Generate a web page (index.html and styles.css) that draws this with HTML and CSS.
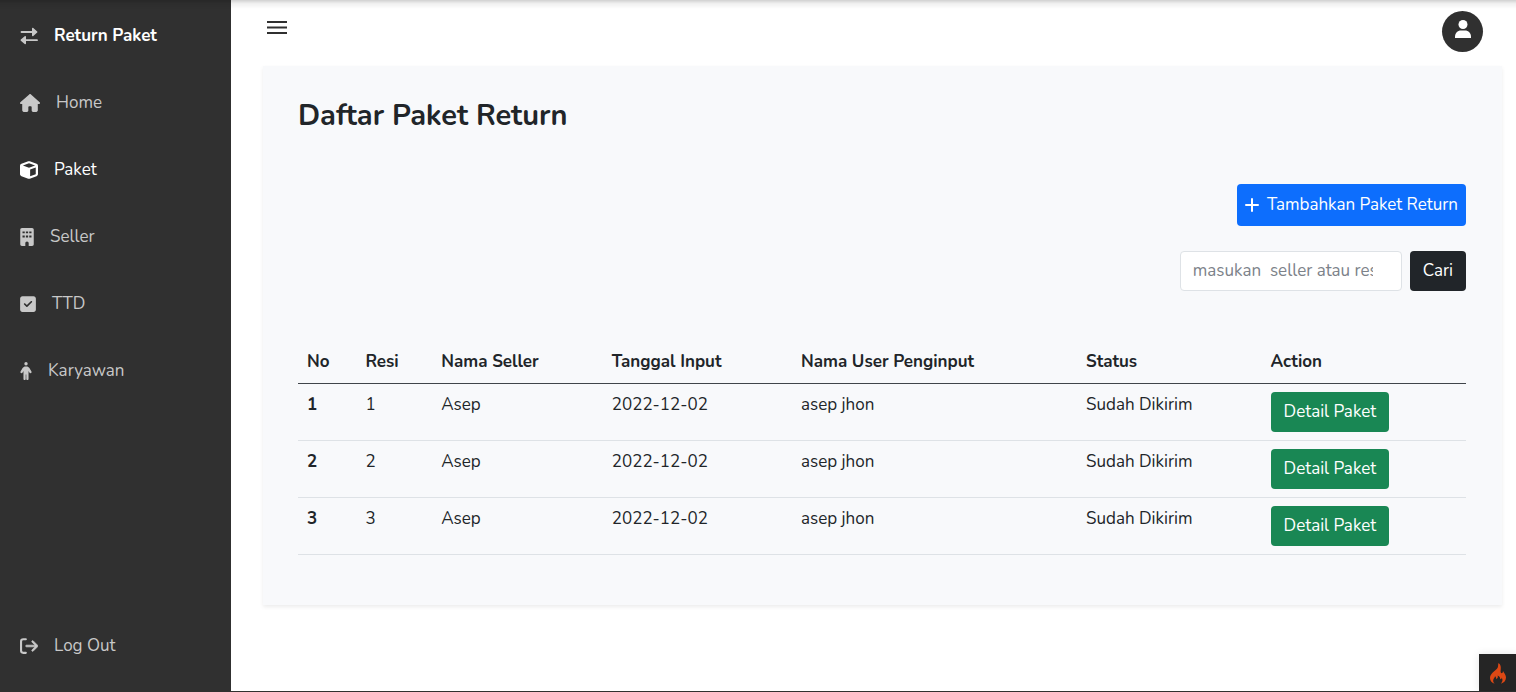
FILE: index.html
```html
<!DOCTYPE html>
<html lang="id">
<head>
<meta charset="utf-8">
<meta name="viewport" content="width=device-width, initial-scale=1">
<title>Daftar Paket Return</title>
<link rel="stylesheet" href="styles.css">
</head>
<body>
<div class="top-shade"></div>
<div class="layout">
  <nav class="sidebar" aria-label="Menu utama">
    <a class="nav-link brand" href="#"><svg class="icon" width="18" height="18" viewBox="0 0 18 18"><path d="M1.500 5H13M5 13.200h12" stroke="currentColor" stroke-width="1.800" stroke-linecap="round"/><path d="M12 1.600c0-.7.800-1 1.300-.5l3.900 3.300c.4.300.4.900 0 1.200L13.300 8.900c-.5.500-1.300.2-1.300-.5zM6 9.800c0-.7-.8-1-1.300-.5L.8 12.600c-.4.300-.4.900 0 1.200l3.900 3.300c.5.500 1.300.2 1.300-.5z"/></svg>Return Paket</a>
    <a class="nav-link" href="#"><svg class="icon" width="20" height="18" viewBox="0 0 576 512"><path d="M576 256c0 18-15 32-32 32h-32l1 160v19c0 25-20 45-45 45h-92c-22 0-40-18-40-40V376c0-14-10-24-24-24h-48c-14 0-24 10-24 24v96c0 22-18 40-40 40h-92c-25 0-44-20-44-44V288H32c-18 0-32-14-32-32 0-9 3-17 10-24L266 8c7-7 15-8 22-8s15 2 21 7l256 225c8 7 12 15 11 24z"/></svg>Home</a>
    <a class="nav-link active" href="#"><svg class="icon" width="18" height="18" viewBox="0 0 512 512"><path fill-rule="evenodd" d="M234 10c14-5 30-5 44 0l192 69c25 9 42 33 42 60v234c0 27-17 51-42 60l-192 69c-14 5-30 5-44 0L42 433c-25-9-42-33-42-60V139c0-27 17-51 42-60zM256 66 82 129l174 63 174-63zm32 368 160-58V187l-160 58z"/></svg>Paket</a>
    <a class="nav-link" href="#"><svg class="icon" width="14" height="18" viewBox="0 0 384 512"><path fill-rule="evenodd" d="M48 0h288c27 0 48 21 48 48v416c0 27-21 48-48 48h-96v-80c0-27-21-48-48-48s-48 21-48 48v80H48c-27 0-48-21-48-48V48C0 21 21 0 48 0zM64 96v56h64V96zm96 0v56h64V96zm96 0v56h64V96zM64 216v56h64v-56zm96 0v56h64v-56zm96 0v56h64v-56z"/></svg>Seller</a>
    <a class="nav-link" href="#"><svg class="icon" width="16" height="18" viewBox="0 0 448 512"><path fill-rule="evenodd" d="M64 32h320c35 0 64 29 64 64v320c0 35-29 64-64 64H64c-35 0-64-29-64-64V96c0-35 29-64 64-64zm273 177c9-9 9-25 0-34s-25-9-34 0L192 286l-47-47c-9-9-25-9-34 0s-9 25 0 34l64 64c9 9 25 9 34 0z"/></svg>TTD</a>
    <a class="nav-link" href="#"><svg class="icon" width="12" height="18" viewBox="0 0 320 512"><circle cx="160" cy="48" r="48"/><path d="M152 352v128c0 18-14 32-32 32s-32-14-32-32V257l-29 47c-9 16-28 20-43 11s-20-29-11-44l58-97c18-29 49-46 83-46h28c34 0 65 17 83 46l58 97c9 15 4 35-11 44s-34 4-43-11l-29-47v223c0 18-14 32-32 32s-32-14-32-32V352z"/></svg>Karyawan</a>
    <a class="nav-link logout" href="#"><svg class="icon" width="18" height="18" viewBox="0 0 512 512"><path d="M505 273c9-10 9-25 0-34L377 111c-10-10-26-9-35 0-10 10-9 26 0 35l86 86H184c-13 0-24 11-24 24s11 24 24 24h244l-86 86c-9 9-10 25 0 35 9 9 25 10 35 0z" stroke="currentColor" stroke-width="20"/><path d="M166 62H94C57 62 30 91 30 126v260c0 35 27 64 64 64h72" fill="none" stroke="currentColor" stroke-width="60" stroke-linecap="round"/></svg>Log Out</a>
  </nav>
  <div class="content">
    <header class="topbar">
      <button class="menu-toggle" type="button" aria-label="Buka menu"><svg width="20" height="14" viewBox="0 0 20 14"><path d="M0 1h20M0 6.500h20M0 12h20" stroke="#303030" stroke-width="1.800"/></svg></button>
      <button class="avatar" type="button" aria-label="Profil"><svg width="16" height="18" viewBox="0 0 16 18"><circle cx="8" cy="4.500" r="4.500"/><path d="M0 18v-1c0-4 2.500-6.500 6-6.500h4c3.500 0 6 2.500 6 6.500v1z"/></svg></button>
    </header>
    <main class="card">
      <h1 class="title">Daftar Paket Return</h1>
      <div class="actions">
        <a class="btn btn-add" href="#"><svg width="14" height="14" viewBox="0 0 14 14"><path d="M7 1v12M1 7h12" stroke="currentColor" stroke-width="2" stroke-linecap="round"/></svg>Tambahkan Paket Return</a>
        <form class="search">
          <input class="search-input" type="text" aria-label="Cari seller atau resi" placeholder="masukan  seller atau resi">
          <button class="btn btn-dark" type="button">Cari</button>
        </form>
      </div>
      <table class="table">
        <colgroup><col class="c-no"><col class="c-resi"><col class="c-seller"><col class="c-date"><col class="c-user"><col class="c-status"><col class="c-action"></colgroup>
        <thead><tr><th>No</th><th>Resi</th><th>Nama Seller</th><th>Tanggal Input</th><th>Nama User Penginput</th><th>Status</th><th>Action</th></tr></thead>
        <tbody>
          <tr><th>1</th><td>1</td><td>Asep</td><td>2022-12-02</td><td>asep jhon</td><td>Sudah Dikirim</td><td><a class="btn btn-success" href="#">Detail Paket</a></td></tr>
          <tr><th>2</th><td>2</td><td>Asep</td><td>2022-12-02</td><td>asep jhon</td><td>Sudah Dikirim</td><td><a class="btn btn-success" href="#">Detail Paket</a></td></tr>
          <tr><th>3</th><td>3</td><td>Asep</td><td>2022-12-02</td><td>asep jhon</td><td>Sudah Dikirim</td><td><a class="btn btn-success" href="#">Detail Paket</a></td></tr>
        </tbody>
      </table>
    </main>
  </div>
</div>
<button class="debug-toggle" type="button" aria-label="Debug toolbar"><svg width="16" height="21" viewBox="0 0 16 21"><path d="M8.500 0c-.8 2 .3 3.700-1.500 5.800C5 8 0 10.500 0 15c0 2.600 1.500 4.600 4.600 5.700-1.200-1.200-1.700-2.500-1.300-3.900.4-1.300 1.500-2 1.700-3.500 1 .7 1.300 1.600 1 2.700 1.600-.2 2.300-1.600 1.600-3.400 2 .9 2.600 2.200 2.600 3.600 1.200-.1 1.500-.8 1.500-1.700 1.300 2.200 1 4.500-1 6.300 3.400-1 5.300-3.300 5.300-6.300 0-2.700-2-4.300-3-6.500-.1 1.500-.6 2.200-1.600 2.300C9.200 8.700 13 3 8.500 0z" fill="#dd4814"/></svg></button>
</body>
</html>
```
FILE: styles.css
```css
* { box-sizing: border-box; }

body {
  margin: 0;
  background: #fff;
  color: #212529;
  font: 17px/26px Nunito, Lato, sans-serif;
}

a { color: inherit; text-decoration: none; }

button, input { font: inherit; }

button { cursor: pointer; }

svg { display: block; fill: currentColor; }

.top-shade {
  position: fixed;
  inset: 0 0 auto;
  z-index: 2;
  height: 9px;
  background: linear-gradient(rgba(0, 0, 0, 0.18), rgba(0, 0, 0, 0.06) 40%, transparent);
}

.layout {
  display: flex;
  min-height: 100vh;
  border-bottom: 1px solid #303030;
}

.sidebar {
  display: flex;
  flex-direction: column;
  flex: none;
  width: 231px;
  padding: 2px 0 12px;
  background: #303030;
}

.nav-link {
  display: flex;
  align-items: center;
  gap: 16px;
  height: 67px;
  padding: 0 20px;
  color: #c8c8c8;
}

.brand { color: #fff; font-weight: 700; }
.brand .icon { color: #c8c8c8; }
.active { color: #fff; }
.logout { margin-top: auto; }

.content {
  flex: 1;
  min-width: 0;
  padding: 11px 14px 0 32px;
}

.topbar {
  display: flex;
  justify-content: space-between;
  align-items: flex-start;
  padding: 0 19px 14px 4px;
}

.menu-toggle {
  padding: 10px 0;
  border: 0;
  background: none;
}

.avatar {
  display: grid;
  place-items: start center;
  width: 41px;
  height: 41px;
  padding: 9px 0;
  border: 0;
  border-radius: 50%;
  background: #303030;
  color: #fff;
}

.card {
  padding: 32px 36px 50px 35px;
  background: #f8f9fb;
  box-shadow: 0 2px 4px rgba(0, 0, 0, 0.08);
}

.title {
  margin: 0;
  font-size: 29px;
  line-height: 36px;
  font-weight: 700;
}

.actions {
  display: flex;
  flex-direction: column;
  align-items: flex-end;
  gap: 25px;
  padding: 50px 0;
}

.btn {
  display: inline-block;
  padding: 7px 13px;
  border: 0;
  border-radius: 4px;
  color: #fff;
}

.btn-add {
  display: flex;
  align-items: center;
  gap: 8px;
  padding: 8px;
  background: #0d6efd;
}

.btn-dark { background: #212529; }
.btn-success { display: block; width: fit-content; background: #198754; }

.search { display: flex; gap: 8px; }

.search-input {
  width: 222px;
  padding: 0 28px 0 12px;
  border: 1px solid #dee2e6;
  border-radius: 4px;
  background: #fff;
  color: #212529;
}

.search-input::placeholder { color: #7c8289; opacity: 1; }

.table {
  width: 100%;
  table-layout: fixed;
  border-collapse: collapse;
  text-align: left;
}

.c-no { width: 5%; }
.c-resi { width: 6.5%; }
.c-seller { width: 14.6%; }
.c-date { width: 16.2%; }
.c-user { width: 24.4%; }
.c-status { width: 15.8%; }
.c-action { width: 17.5%; }

.table th, .table td {
  padding: 8px 9px;
  border-bottom: 1px solid #dee2e6;
  vertical-align: top;
}

.table thead th { border-bottom-color: #40454a; }

.debug-toggle {
  position: fixed;
  right: 0;
  bottom: 1px;
  display: grid;
  place-items: center;
  width: 37px;
  height: 37px;
  padding: 2px 0 0;
  border: 0;
  background: #252525;
  box-shadow: 0 0 8px rgba(0, 0, 0, 0.1);
}
```
